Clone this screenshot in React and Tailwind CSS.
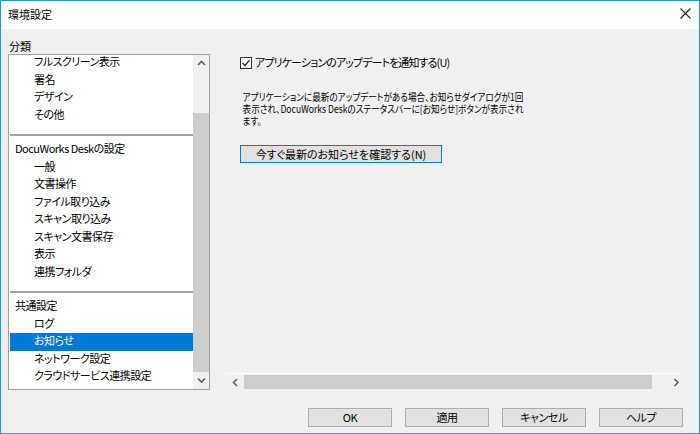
import React from 'react';

const groups = [
  { header: null, items: ['フルスクリーン表示', '署名', 'デザイン', 'その他'] },
  {
    header: 'DocuWorks Deskの設定',
    items: ['一般', '文書操作', 'ファイル取り込み', 'スキャン取り込み', 'スキャン文書保存', '表示', '連携フォルダ'],
  },
  { header: '共通設定', items: ['ログ', 'お知らせ', 'ネットワーク設定', 'クラウドサービス連携設定'] },
];

function Chevron({ dir }) {
  const paths = {
    up: 'M1 5 L4.5 1.5 L8 5',
    down: 'M1 1.5 L4.5 5 L8 1.5',
    left: 'M5 1 L1.5 4.5 L5 8',
    right: 'M1.5 1 L5 4.5 L1.5 8',
  };
  const vertical = dir === 'up' || dir === 'down';
  return (
    <svg width={vertical ? 9 : 7} height={vertical ? 7 : 9} viewBox={vertical ? '0 0 9 7' : '0 0 7 9'}>
      <path d={paths[dir]} fill="none" stroke="#606060" strokeWidth="1.6" />
    </svg>
  );
}

function Row({ label, header, selected }) {
  return (
    <div
      className={`h-[17.5px] pt-[1px] leading-[13px] whitespace-nowrap tracking-[-0.5px] ${header ? 'pl-[5px]' : 'pl-[24px]'} ${
        selected ? 'bg-[#0078d7] text-white' : 'text-black'
      }`}
    >
      {label}
    </div>
  );
}

function CategoryList() {
  return (
    <div className="w-[202px] h-[336px] border border-[#a0a0a0] bg-white flex">
      <div className="flex-1 overflow-hidden pl-[1px]">
        <div className="-mt-[1px]">
          {groups.map((g, i) => (
            <div key={i}>
              {i > 0 && <div className="h-[2px] bg-[#a0a0a0] mt-[10px] mb-[5px]" />}
              {g.header && <Row label={g.header} header />}
              {g.items.map((it) => (
                <Row key={it} label={it} selected={it === 'お知らせ'} />
              ))}
            </div>
          ))}
        </div>
      </div>
      {/* vertical scrollbar */}
      <div className="w-[16px] bg-[#f0f0f0] flex flex-col">
        <div className="h-[17px] flex items-center justify-center">
          <Chevron dir="up" />
        </div>
        <div className="h-[41px]" />
        <div className="flex-1 bg-[#cdcdcd]" />
        <div className="h-[17px] flex items-center justify-center">
          <Chevron dir="down" />
        </div>
      </div>
    </div>
  );
}

function DialogButton({ children }) {
  return (
    <button className="w-[84px] h-[19px] border border-[#adadad] bg-[#e1e1e1] text-[11px] leading-[13px] tracking-[-0.4px] text-black flex items-center justify-center">
      {children}
    </button>
  );
}

export default function App() {
  return (
    <div className="w-[700px] h-[434px] border border-[#1c9ce6] bg-[#f0f0f0] flex flex-col text-[11px] text-black font-['Meiryo_UI','Noto_Sans_CJK_JP',sans-serif] [font-feature-settings:'palt'] overflow-hidden">
      {/* title bar */}
      <div className="h-[28px] bg-white flex items-center justify-between pl-[7px] pr-[8px]">
        <span className="text-[11px] leading-[14px] -mt-[2px]">環境設定</span>
        <svg width="11" height="11" viewBox="0 0 11 11" className="-mt-[3px]">
          <path d="M0.5 0.5 L10.5 10.5 M10.5 0.5 L0.5 10.5" stroke="#222" strokeWidth="1.1" />
        </svg>
      </div>

      <div className="flex-1 flex flex-col pl-[7px] pr-[16px]">
        <div className="flex pt-[10px]">
          <div className="flex flex-col">
            <div className="h-[14px] leading-[14px] pl-[1px]">分類</div>
            <div className="mt-[1px]">
              <CategoryList />
            </div>
          </div>

          <div className="ml-[17px] w-[457px] flex flex-col pt-[15px]">
            <div className="h-[319px] pl-[13px]">
              <label className="mt-[2px] h-[13px] flex items-center gap-[3px]">
                <svg width="12" height="12" viewBox="0 0 12 12">
                  <rect x="0.5" y="0.5" width="11" height="11" fill="white" stroke="#333" />
                  <path d="M2.5 6 L5 8.5 L9.5 3.2" fill="none" stroke="#222" strokeWidth="1.3" />
                </svg>
                <span className="leading-[13px] tracking-[-0.9px]">アプリケーションのアップデートを通知する(U)</span>
              </label>
              <p className="mt-[22px] pl-[3px] text-[10px] leading-[12px] whitespace-nowrap origin-left scale-x-[0.86]">
                アプリケーションに最新のアップデートがある場合、お知らせダイアログが1回
                <br />
                表示され、DocuWorks Deskのステータスバーに[お知らせ]ボタンが表示され
                <br />
                ます。
              </p>
              <button className="mt-[18px] w-[202px] h-[18px] border border-[#0078d7] bg-[#e1e1e1] text-[11px] leading-[13px] flex items-center justify-center">
                今すぐ最新のお知らせを確認する(N)
              </button>
            </div>
            {/* horizontal scrollbar */}
            <div className="h-[17px] border-t border-white flex">
              <div className="w-[17px] flex items-center justify-center">
                <Chevron dir="left" />
              </div>
              <div className="flex-1 flex pr-[14px] py-[1px]">
                <div className="flex-1 bg-[#cdcdcd]" />
              </div>
              <div className="w-[17px] flex items-center justify-center pl-[3px]">
                <Chevron dir="right" />
              </div>
            </div>
          </div>
        </div>

        <div className="mt-[18px] flex justify-end gap-[13px]">
          <DialogButton>OK</DialogButton>
          <DialogButton>適用</DialogButton>
          <DialogButton>キャンセル</DialogButton>
          <DialogButton>ヘルプ</DialogButton>
        </div>
      </div>
    </div>
  );
}
